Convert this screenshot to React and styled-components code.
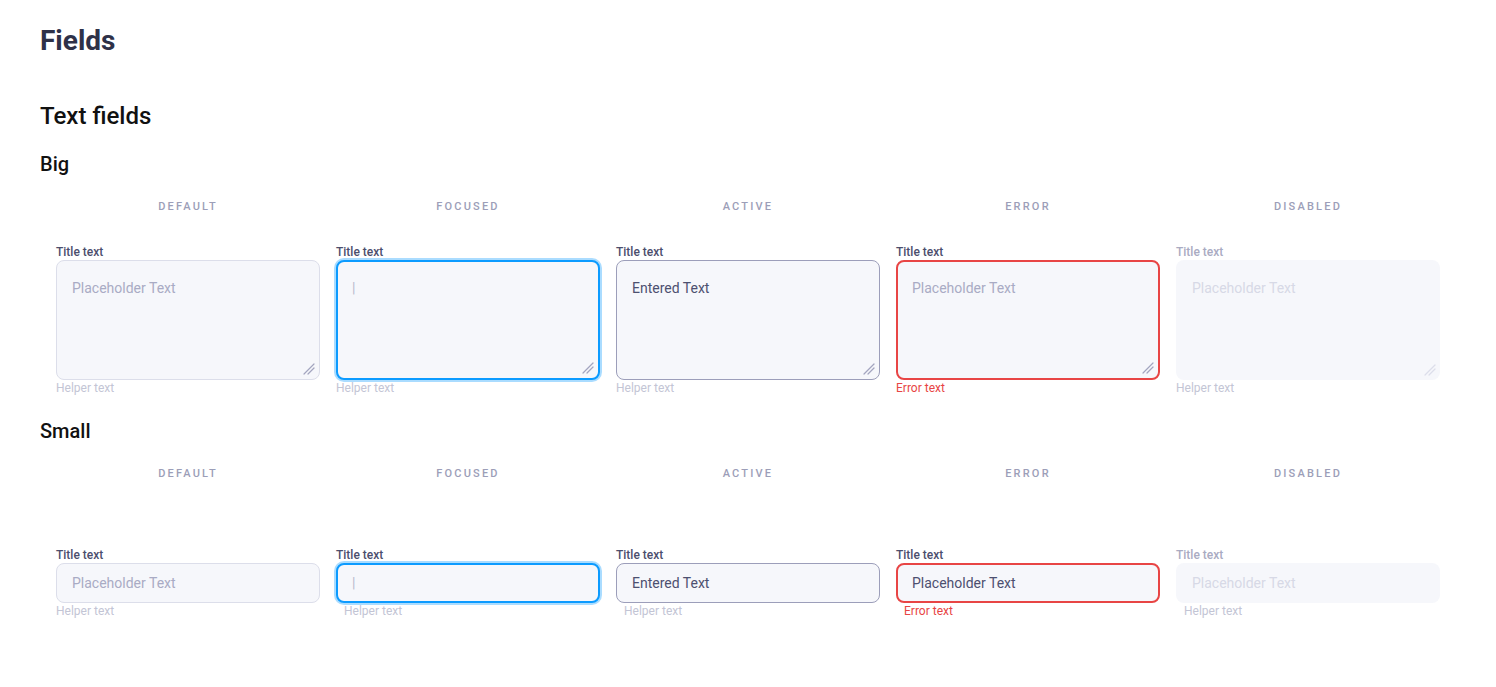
import React from 'react';
import styled, { createGlobalStyle, css } from 'styled-components';

const GlobalStyle = createGlobalStyle`
  body {
    margin: 0;
    background: #ffffff;
    font-family: Roboto, "Liberation Sans", sans-serif;
  }
`;

const Page = styled.div`
  padding: 23px 40px 40px;
`;

const PageTitle = styled.h1`
  margin: 0;
  font-size: 28px;
  line-height: 36px;
  font-weight: 700;
  color: #2e3148;
`;

const SectionTitle = styled.h2`
  margin: 41px 0 0;
  font-size: 24px;
  line-height: 32px;
  font-weight: 500;
  color: #111111;
`;

const GroupTitle = styled.h3`
  margin: ${p => p.$top}px 0 0;
  font-size: 20px;
  line-height: 28px;
  font-weight: 500;
  color: #111111;
`;

const Grid = styled.div`
  display: grid;
  grid-template-columns: repeat(5, 280px);
  margin-top: 20px;
`;

const Column = styled.div`
  display: flex;
  flex-direction: column;
  padding-left: 16px;
`;

const StateLabel = styled.div`
  font-size: 11px;
  line-height: 16px;
  padding-top: 1px;
  font-weight: 500;
  letter-spacing: 2.2px;
  text-transform: uppercase;
  text-align: center;
  color: #9c9eb8;
  margin-bottom: ${p => p.$gap}px;
`;

const Title = styled.div`
  font-size: 12px;
  line-height: 16px;
  font-weight: 500;
  color: ${p => (p.$disabled ? '#a9abc2' : '#4b4e6d')};
`;

const borders = {
  default: css`border: 1px solid #dcdeea;`,
  focused: css`
    border: 2px solid #0c9bff;
    box-shadow: 0 0 0 2px rgba(12, 155, 255, 0.35);
  `,
  active: css`border: 1px solid #9c9eba;`,
  error: css`border: 2px solid #e84545;`,
  disabled: css`border: 0 solid transparent;`,
};

const bw = { default: 1, focused: 2, active: 1, error: 2, disabled: 0 };

const Field = styled.div`
  position: relative;
  box-sizing: border-box;
  height: ${p => (p.$big ? 120 : 40)}px;
  border-radius: 8px;
  background: #f6f7fb;
  ${p => borders[p.$state]}
  padding: ${p =>
    p.$big
      ? `${18 - bw[p.$state]}px ${16 - bw[p.$state]}px`
      : `0 ${16 - bw[p.$state]}px`};
  display: flex;
  align-items: ${p => (p.$big ? 'flex-start' : 'center')};
`;

const Value = styled.span`
  font-size: 14px;
  line-height: 20px;
  color: ${p => p.$color};
`;

const Resize = styled.svg`
  position: absolute;
  right: 4px;
  bottom: 4px;
`;

const Helper = styled.div`
  font-size: 12px;
  line-height: 16px;
  padding-left: ${p => p.$indent}px;
  color: ${p => (p.$error ? '#e84545' : '#c3c5d5')};
`;

const STATES = [
  { key: 'default', label: 'Default', text: 'Placeholder Text', color: '#a9abc4' },
  { key: 'focused', label: 'Focused', text: '|', color: '#b8bacd' },
  { key: 'active', label: 'Active', text: 'Entered Text', color: '#4d5070' },
  { key: 'error', label: 'Error', text: 'Placeholder Text', color: '#a9abc4' },
  { key: 'disabled', label: 'Disabled', text: 'Placeholder Text', color: '#d7d9e6' },
];

const ResizeIcon = ({ faded }) => (
  <Resize width="12" height="12" viewBox="0 0 12 12">
    <g stroke={faded ? '#dcdeea' : '#a3a5bf'} strokeWidth="1.2" strokeLinecap="round">
      <line x1="1" y1="11" x2="11" y2="1" />
      <line x1="5" y1="11" x2="11" y2="5" />
    </g>
  </Resize>
);

const FieldCell = ({ s, big }) => {
  const text = !big && s.key === 'error' ? 'Placeholder Text' : s.text;
  const color = !big && s.key === 'error' ? '#4d5070' : s.color;
  const indent = !big && s.key !== 'default' ? 8 : 0;
  return (
    <>
      <Title $disabled={s.key === 'disabled'}>Title text</Title>
      <Field $state={s.key} $big={big}>
        <Value $color={color}>{text}</Value>
        {big && <ResizeIcon faded={s.key === 'disabled'} />}
      </Field>
      <Helper $error={s.key === 'error'} $indent={indent}>
        {s.key === 'error' ? 'Error text' : 'Helper text'}
      </Helper>
    </>
  );
};

const FieldRow = ({ big }) => (
  <Grid>
    {STATES.map(s => (
      <Column key={s.key}>
        <StateLabel $gap={big ? 29 : 65}>{s.label}</StateLabel>
        <FieldCell s={s} big={big} />
      </Column>
    ))}
  </Grid>
);

export default function App() {
  return (
    <Page>
      <GlobalStyle />
      <PageTitle>Fields</PageTitle>
      <SectionTitle>Text fields</SectionTitle>
      <GroupTitle $top={18}>Big</GroupTitle>
      <FieldRow big />
      <GroupTitle $top={21}>Small</GroupTitle>
      <FieldRow />
    </Page>
  );
}
